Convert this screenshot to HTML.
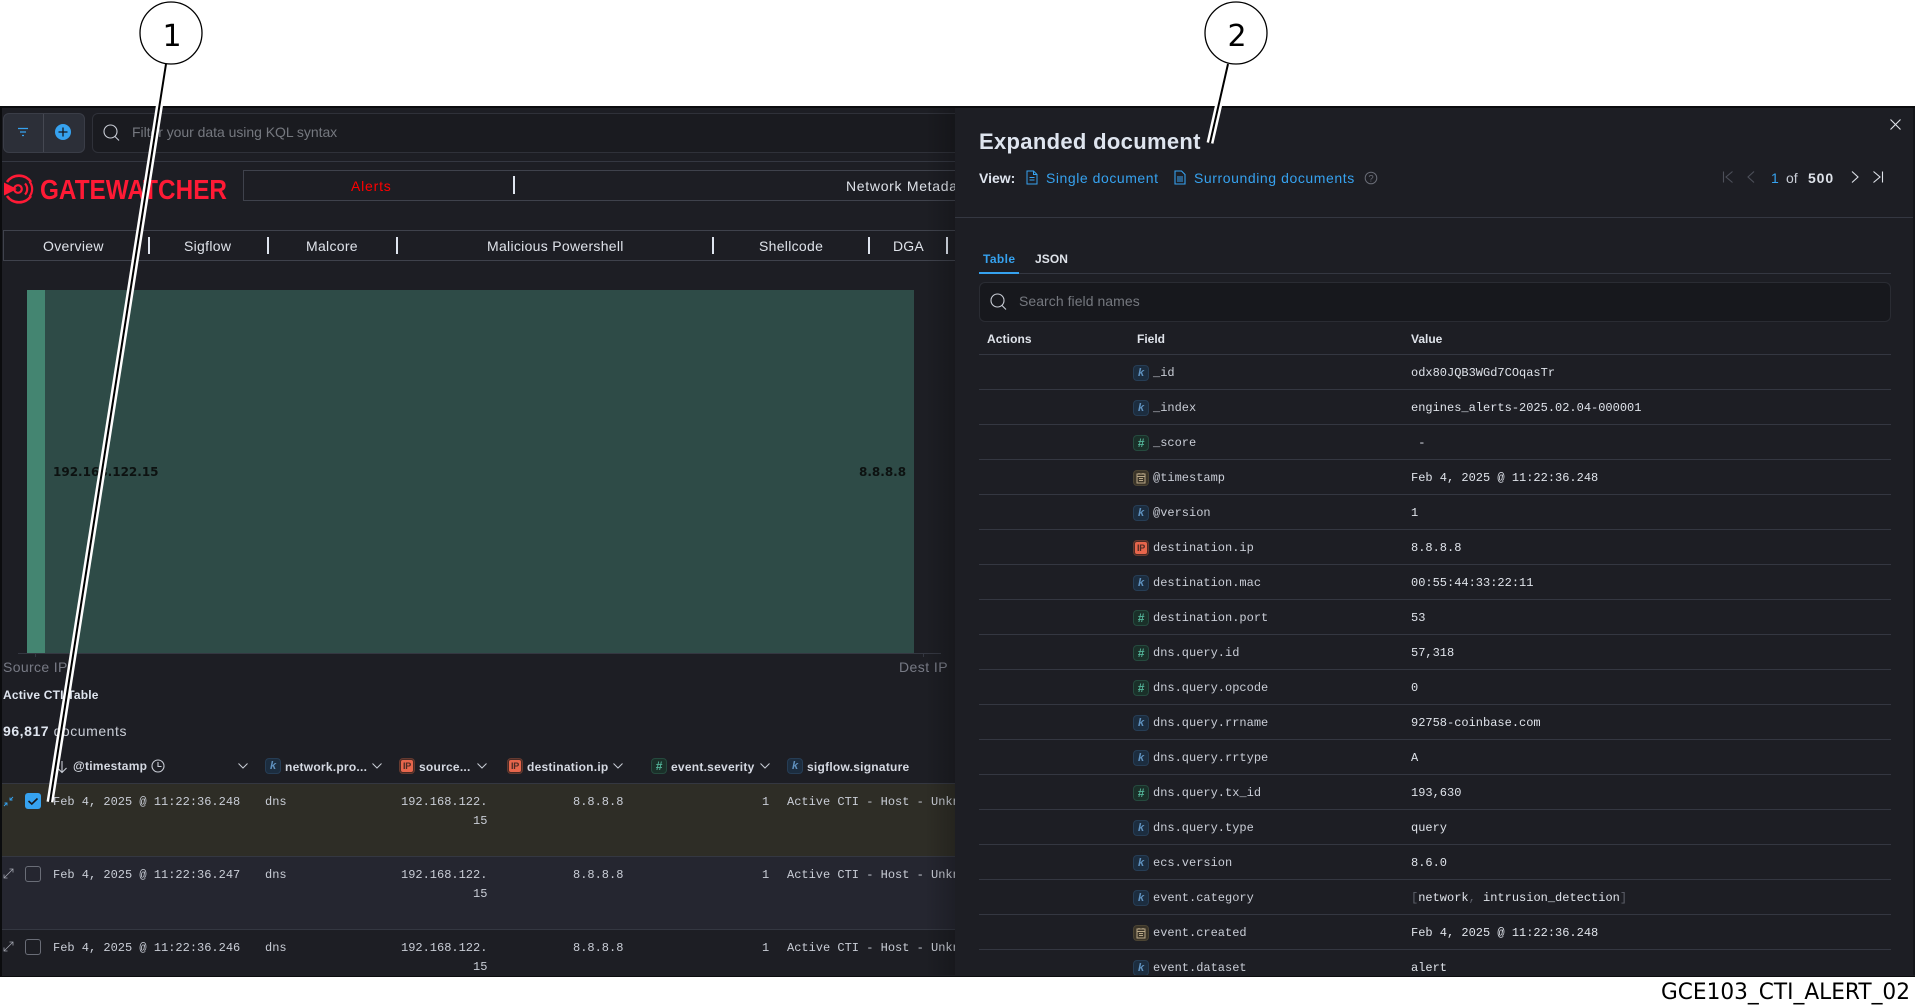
<!DOCTYPE html>
<html><head><meta charset="utf-8"><style>
html,body{margin:0;padding:0;background:#fff;width:1915px;height:1008px;overflow:hidden}
body{position:relative;font-family:"Liberation Sans",sans-serif}
.a{position:absolute;white-space:nowrap}
#app{position:absolute;left:0;top:106px;width:1915px;height:871px;background:#1d1e24;overflow:hidden;border-top:2px solid #0b0c0e;border-bottom:1px solid #0b0c0e;box-sizing:border-box}
#vl{position:absolute;left:0;top:106px;width:2px;height:871px;background:#0b0c0e}
.t{position:absolute;white-space:nowrap;line-height:16px}
.m{font-family:"Liberation Mono",monospace;font-size:12px;color:#c9cdd6;line-height:19px}
.sep{position:absolute;width:2px;height:20px;background:#dfe5ef}
.b{position:absolute;width:16px;height:16px;box-sizing:border-box;border-radius:4px;border:1px solid;text-align:center;font-size:11px;line-height:14px;font-weight:bold;font-style:italic;font-family:"Liberation Sans",sans-serif}
.k{background:#1c2d3f;border-color:#263d55;color:#6092c0}
.h{background:#1a3029;border-color:#254a3e;color:#54b399;font-size:12px}
.i{background:#4b2a24;border-color:#663a30;color:#1d1e24;font-style:normal}
.i:before{content:"IP";position:absolute;left:1px;top:1px;width:12px;height:12px;background:#e7664c;border-radius:2px;font-size:9px;line-height:12px;color:#4b2a24;font-weight:bold;letter-spacing:-.2px}
.d{background:#3a3428;border-color:#4b4433}
.d svg{position:absolute;left:2px;top:1px}
.hd{position:absolute;color:#d5d9e2;font-size:12px;font-weight:bold;line-height:16px;white-space:nowrap;letter-spacing:.25px}
#fly{position:absolute;left:955px;top:108px;width:960px;height:867px;background:#1d1e24;overflow:hidden}
.fr{position:absolute;left:24px;width:912px;height:35px;border-bottom:1px solid #343741;box-sizing:border-box}
.fr .b{left:154px;top:10px}
.fr .n{position:absolute;left:174px;top:10px;font-family:"Liberation Mono",monospace;font-size:12px;line-height:16px;color:#c9cdd6;white-space:nowrap}
.fr .v{position:absolute;left:432px;top:10px;font-family:"Liberation Mono",monospace;font-size:12px;line-height:16px;color:#dfe3ea;white-space:nowrap}
.blue{color:#36a2ef}
</style></head><body>
<div id="app"></div>
<div style="position:absolute;left:0;top:0;width:1915px;height:1008px">
<!-- filter bar -->
<div class="a" style="left:3px;top:113px;width:82px;height:40px;box-sizing:border-box;background:#2c2f38;border:1px solid #3a3d47;border-radius:6px"></div>
<div class="a" style="left:43px;top:114px;width:1px;height:38px;background:#454852"></div>
<svg class="a" style="left:16px;top:126px" width="14" height="12" viewBox="0 0 14 12"><path d="M2 2.500H12M4 6H10M6 9.500H8" stroke="#36a2ef" stroke-width="1.200" fill="none"/></svg>
<svg class="a" style="left:55px;top:124px" width="16" height="16" viewBox="0 0 16 16"><circle cx="8" cy="8" r="8" fill="#36a2ef"/><path d="M8 3.500V12.500M3.500 8H12.500" stroke="#16171c" stroke-width="1.300"/></svg>
<div class="a" style="left:92px;top:113px;width:880px;height:40px;box-sizing:border-box;background:#1a1b20;border:1px solid #2f3139;border-radius:6px"></div>
<svg class="a" style="left:103px;top:124px" width="18" height="18" viewBox="0 0 18 18"><circle cx="7.500" cy="7.500" r="6.500" stroke="#c9cdd6" stroke-width="1.100" fill="none"/><path d="M12 12.500L16 16.500" stroke="#c9cdd6" stroke-width="1.100"/></svg>
<div class="t" style="left:132px;top:124px;font-size:14px;color:#75787f;letter-spacing:-.04px">Filter your data using KQL syntax</div>
<div class="a" style="left:0;top:161px;width:955px;height:1px;background:#343741"></div>
<!-- logo -->
<svg class="a" style="left:2px;top:172px" width="34" height="34" viewBox="0 0 34 34"><path d="M5 10A14.500 14.500 0 0 1 29 10M5 24A14.500 14.500 0 0 0 29 24" stroke="#ff1a35" stroke-width="2.600" fill="none"/><path d="M2 10.500L15 17L2 23.500Z" fill="#ff1a35"/><circle cx="16" cy="17" r="3.800" stroke="#ff1a35" stroke-width="2.200" fill="none"/><path d="M23 11.500A8 8 0 0 1 23 22.500M27.500 9.500A12 12 0 0 1 27.500 24.500" stroke="#ff1a35" stroke-width="2.200" fill="none"/></svg>
<svg class="a" style="left:38px;top:172px" width="195" height="34"><text x="2" y="27" font-family="Liberation Sans" font-weight="bold" font-size="27.500" fill="#ff1a35" textLength="187" lengthAdjust="spacingAndGlyphs">GATEWATCHER</text></svg>
<div class="a" style="left:243px;top:170px;width:730px;height:31px;box-sizing:border-box;border:1px solid #3f424c"></div>
<div class="t" style="left:351px;top:178px;font-size:14px;color:#f00;letter-spacing:.8px">Alerts</div>
<div class="sep" style="left:513px;top:176px;height:18px"></div>
<div class="t" style="left:846px;top:178px;font-size:14px;color:#dfe3ea;letter-spacing:.7px">Network Metadata</div>
<!-- tabs -->
<div class="a" style="left:3px;top:230px;width:970px;height:31px;box-sizing:border-box;border:1px solid #3f424c"></div>
<div class="t" style="left:43px;top:238px;font-size:14px;color:#dfe3ea;letter-spacing:.3px">Overview</div>
<div class="sep" style="left:148px;top:237px;height:17px"></div>
<div class="t" style="left:184px;top:238px;font-size:14px;color:#dfe3ea;letter-spacing:.3px">Sigflow</div>
<div class="sep" style="left:267px;top:237px;height:17px"></div>
<div class="t" style="left:306px;top:238px;font-size:14px;color:#dfe3ea;letter-spacing:.3px">Malcore</div>
<div class="sep" style="left:396px;top:237px;height:17px"></div>
<div class="t" style="left:487px;top:238px;font-size:14px;color:#dfe3ea;letter-spacing:.3px">Malicious Powershell</div>
<div class="sep" style="left:712px;top:237px;height:17px"></div>
<div class="t" style="left:759px;top:238px;font-size:14px;color:#dfe3ea;letter-spacing:.3px">Shellcode</div>
<div class="sep" style="left:868px;top:237px;height:17px"></div>
<div class="t" style="left:893px;top:238px;font-size:14px;color:#dfe3ea;letter-spacing:.2px">DGA</div>
<div class="sep" style="left:946px;top:237px;height:17px"></div>
<!-- chart -->
<div class="a" style="left:27px;top:290px;width:887px;height:363px;background:#2e4b47"></div>
<div class="a" style="left:27px;top:290px;width:18px;height:363px;background:#448571"></div>
<div class="a" style="left:18px;top:653px;width:923px;height:1px;background:#343741"></div>
<div class="a" style="left:35px;top:653px;width:1px;height:4px;background:#343741"></div>
<div class="a" style="left:923px;top:653px;width:1px;height:4px;background:#343741"></div>
<div class="t" style="left:53px;top:464px;font-family:'DejaVu Sans',sans-serif;font-weight:bold;font-size:12px;color:#0d1211">192.168.122.15</div>
<div class="t" style="left:859px;top:464px;font-family:'DejaVu Sans',sans-serif;font-weight:bold;font-size:12px;color:#0d1211">8.8.8.8</div>
<div class="t" style="left:3px;top:659px;font-size:14px;color:#777a85;letter-spacing:.35px">Source IP</div>
<div class="t" style="left:899px;top:659px;font-size:14px;color:#777a85;letter-spacing:.45px">Dest IP</div>
<div class="t" style="left:3px;top:687px;font-size:12px;font-weight:bold;color:#dfe5ef;letter-spacing:.2px">Active CTI Table</div>
<div class="t" style="left:3px;top:723px;font-size:14px;color:#c9cdd6;letter-spacing:.55px"><b style="color:#dfe5ef">96,817</b> documents</div>
<!-- header -->
<svg class="a" style="left:55px;top:760px" width="14" height="14" viewBox="0 0 14 14"><path d="M7 1V12M2.500 8L7 12.500L11.500 8" stroke="#c9cdd6" stroke-width="1.100" fill="none"/></svg>
<div class="hd" style="left:73px;top:758px;font-size:12px">@timestamp</div>
<svg class="a" style="left:151px;top:759px" width="14" height="14" viewBox="0 0 14 14"><circle cx="7" cy="7" r="6" stroke="#c9cdd6" stroke-width="1.100" fill="none"/><path d="M7 3V7.500H10.500" stroke="#c9cdd6" stroke-width="1.100" fill="none"/></svg>
<svg class="a" style="left:237px;top:760px" width="12" height="12" viewBox="0 0 12 12"><path d="M1.500 3.500L6 8L10.500 3.500" stroke="#c9cdd6" stroke-width="1" fill="none"/></svg>
<div class="b k" style="left:265px;top:758px">k</div><div class="hd" style="left:285px;top:759px">network.pro...</div>
<svg class="a" style="left:371px;top:760px" width="12" height="12" viewBox="0 0 12 12"><path d="M1.500 3.500L6 8L10.500 3.500" stroke="#c9cdd6" stroke-width="1" fill="none"/></svg>
<div class="b i" style="left:399px;top:758px"></div><div class="hd" style="left:419px;top:759px">source...</div>
<svg class="a" style="left:476px;top:760px" width="12" height="12" viewBox="0 0 12 12"><path d="M1.500 3.500L6 8L10.500 3.500" stroke="#c9cdd6" stroke-width="1" fill="none"/></svg>
<div class="b i" style="left:507px;top:758px"></div><div class="hd" style="left:527px;top:759px">destination.ip</div>
<svg class="a" style="left:612px;top:760px" width="12" height="12" viewBox="0 0 12 12"><path d="M1.500 3.500L6 8L10.500 3.500" stroke="#c9cdd6" stroke-width="1" fill="none"/></svg>
<div class="b h" style="left:651px;top:758px">#</div><div class="hd" style="left:671px;top:759px">event.severity</div>
<svg class="a" style="left:759px;top:760px" width="12" height="12" viewBox="0 0 12 12"><path d="M1.500 3.500L6 8L10.500 3.500" stroke="#c9cdd6" stroke-width="1" fill="none"/></svg>
<div class="b k" style="left:787px;top:758px">k</div><div class="hd" style="left:807px;top:759px">sigflow.signature</div>
<div class="a" style="left:2px;top:783px;width:953px;height:1px;background:#343741"></div>
<!-- rows -->
<div class="a" style="left:2px;top:784px;width:953px;height:72px;background:#2e2d26"></div>
<div class="a" style="left:2px;top:856px;width:953px;height:1px;background:#343741"></div>
<div class="a" style="left:2px;top:857px;width:953px;height:72px;background:#252630"></div>
<div class="a" style="left:2px;top:929px;width:953px;height:1px;background:#343741"></div>
<svg class="a" style="left:2px;top:795px" width="12" height="12" viewBox="0 0 12 12"><path d="M2 11L5 8M5 10.500V8H2.500M11 2L8 5M8 2.500V5H10.500" stroke="#36a2ef" stroke-width=".9" fill="none"/></svg>
<svg class="a" style="left:2px;top:867px" width="12" height="12" viewBox="0 0 12 12"><path d="M2 11L11 2M7.500 2H11V5.500M2 7.500V11H5.500" stroke="#a0a3ad" stroke-width=".8" fill="none"/></svg>
<svg class="a" style="left:2px;top:940px" width="12" height="12" viewBox="0 0 12 12"><path d="M2 11L11 2M7.500 2H11V5.500M2 7.500V11H5.500" stroke="#a0a3ad" stroke-width=".8" fill="none"/></svg>
<svg class="a" style="left:25px;top:793px" width="16" height="16" viewBox="0 0 16 16"><rect width="16" height="16" rx="3" fill="#36a2ef"/><path d="M3.500 8L6.800 11L12.500 5.500" stroke="#16171c" stroke-width="1.600" fill="none"/></svg>
<div class="a" style="left:25px;top:866px;width:16px;height:16px;box-sizing:border-box;border:1px solid #6a6d77;border-radius:3px"></div>
<div class="a" style="left:25px;top:939px;width:16px;height:16px;box-sizing:border-box;border:1px solid #6a6d77;border-radius:3px"></div>
<div style="position:absolute;left:0;top:0;width:955px;height:976px;overflow:hidden">
<div class="t m" style="left:53px;top:793px">Feb 4, 2025 @ 11:22:36.248</div>
<div class="t m" style="left:265px;top:793px">dns</div>
<div class="t m" style="left:401px;top:793px">192.168.122.</div><div class="t m" style="left:473px;top:812px">15</div>
<div class="t m" style="left:573px;top:793px">8.8.8.8</div>
<div class="t m" style="left:762px;top:793px">1</div>
<div class="t m" style="left:787px;top:793px">Active CTI - Host - Unknown</div>
<div class="t m" style="left:53px;top:866px">Feb 4, 2025 @ 11:22:36.247</div>
<div class="t m" style="left:265px;top:866px">dns</div>
<div class="t m" style="left:401px;top:866px">192.168.122.</div><div class="t m" style="left:473px;top:885px">15</div>
<div class="t m" style="left:573px;top:866px">8.8.8.8</div>
<div class="t m" style="left:762px;top:866px">1</div>
<div class="t m" style="left:787px;top:866px">Active CTI - Host - Unknown</div>
<div class="t m" style="left:53px;top:939px">Feb 4, 2025 @ 11:22:36.246</div>
<div class="t m" style="left:265px;top:939px">dns</div>
<div class="t m" style="left:401px;top:939px">192.168.122.</div><div class="t m" style="left:473px;top:958px">15</div>
<div class="t m" style="left:573px;top:939px">8.8.8.8</div>
<div class="t m" style="left:762px;top:939px">1</div>
<div class="t m" style="left:787px;top:939px">Active CTI - Host - Unknown</div>
</div>
<!-- flyout shadow -->
<div class="a" style="left:925px;top:108px;width:30px;height:867px;background:linear-gradient(to right,rgba(0,0,0,0),rgba(0,0,0,.2))"></div>
<!-- flyout -->
<div id="fly">
<div class="a" style="right:0;top:0;width:2px;height:867px;background:#14151a"></div>
<svg class="a" style="left:934px;top:10px" width="13" height="13" viewBox="0 0 13 13"><path d="M1.500 1.500L11.500 11.500M11.500 1.500L1.500 11.500" stroke="#dfe3ea" stroke-width="1.100"/></svg>
<div class="t" style="left:24px;top:20px;font-size:22px;line-height:28px;font-weight:bold;color:#dfe5ef;letter-spacing:.32px">Expanded document</div>
<div class="t" style="left:24px;top:62px;font-size:14px;font-weight:bold;color:#dfe5ef">View:</div>
<svg class="a" style="left:71px;top:62px" width="12" height="15" viewBox="0 0 12 15"><path d="M1 1H7.500L11 4.500V14H1ZM7.500 1V4.500H11M3.500 7.500H8.500M3.500 10H8.500" stroke="#36a2ef" stroke-width="1" fill="none"/></svg>
<div class="t blue" style="left:91px;top:62px;font-size:14px;letter-spacing:.55px">Single document</div>
<svg class="a" style="left:219px;top:62px" width="12" height="15" viewBox="0 0 12 15"><path d="M1 1H7.500L11 4.500V14H1ZM3 7H9M3 9H9M3 11H9" stroke="#36a2ef" stroke-width="1.100" fill="none"/></svg>
<div class="t blue" style="left:239px;top:62px;font-size:14px;letter-spacing:.58px">Surrounding documents</div>
<svg class="a" style="left:409px;top:63px" width="14" height="14" viewBox="0 0 14 14"><circle cx="7" cy="7" r="5.800" stroke="#6a6d77" stroke-width="1" fill="none"/><text x="7" y="10.500" font-size="9.500" text-anchor="middle" fill="#6a6d77" font-family="Liberation Sans">?</text></svg>
<svg class="a" style="left:766px;top:62px" width="14" height="14" viewBox="0 0 14 14"><path d="M2.500 1.500V12.500M11.500 1.500L5 7L11.500 12.500" stroke="#4d505a" stroke-width="1.100" fill="none"/></svg>
<svg class="a" style="left:789px;top:62px" width="14" height="14" viewBox="0 0 14 14"><path d="M10 1.500L4 7L10 12.500" stroke="#4d505a" stroke-width="1.100" fill="none"/></svg>
<div class="t blue" style="left:816px;top:62px;font-size:14px">1</div>
<div class="t" style="left:831px;top:62px;font-size:14px;color:#c9cdd6">of</div>
<div class="t" style="left:853px;top:62px;font-size:14px;font-weight:bold;color:#dfe3ea;letter-spacing:.9px">500</div>
<svg class="a" style="left:893px;top:62px" width="14" height="14" viewBox="0 0 14 14"><path d="M4 1.500L10 7L4 12.500" stroke="#dfe3ea" stroke-width="1.100" fill="none"/></svg>
<svg class="a" style="left:916px;top:62px" width="14" height="14" viewBox="0 0 14 14"><path d="M2.500 1.500L9 7L2.500 12.500M11.500 1.500V12.500" stroke="#dfe3ea" stroke-width="1.100" fill="none"/></svg>
<div class="a" style="left:0;top:109px;width:958px;height:1px;background:#343741"></div>
<div class="t blue" style="left:28px;top:143px;font-size:12px;font-weight:bold;letter-spacing:.4px">Table</div>
<div class="t" style="left:80px;top:143px;font-size:12px;font-weight:bold;color:#dfe3ea;letter-spacing:.1px">JSON</div>
<div class="a" style="left:24px;top:165px;width:912px;height:1px;background:#343741"></div>
<div class="a" style="left:24px;top:164px;width:40px;height:2px;background:#36a2ef"></div>
<div class="a" style="left:24px;top:174px;width:912px;height:40px;box-sizing:border-box;background:#17181d;border:1px solid #2a2c33;border-radius:6px"></div>
<svg class="a" style="left:35px;top:185px" width="18" height="18" viewBox="0 0 18 18"><circle cx="7.500" cy="7.500" r="6.500" stroke="#c9cdd6" stroke-width="1.100" fill="none"/><path d="M12 12.500L16 16.500" stroke="#c9cdd6" stroke-width="1.100"/></svg>
<div class="t" style="left:64px;top:185px;font-size:14px;color:#75787f;letter-spacing:.05px">Search field names</div>
<div class="t" style="left:32px;top:223px;font-size:12px;font-weight:bold;color:#dfe3ea;letter-spacing:.1px">Actions</div>
<div class="t" style="left:182px;top:223px;font-size:12px;font-weight:bold;color:#dfe3ea">Field</div>
<div class="t" style="left:456px;top:223px;font-size:12px;font-weight:bold;color:#dfe3ea">Value</div>
<div class="a" style="left:24px;top:246px;width:912px;height:1px;background:#343741"></div>
<div class="fr" style="top:247px"><div class="b k">k</div><div class="n">_id</div><div class="v">odx80JQB3WGd7COqasTr</div></div>
<div class="fr" style="top:282px"><div class="b k">k</div><div class="n">_index</div><div class="v">engines_alerts-2025.02.04-000001</div></div>
<div class="fr" style="top:317px"><div class="b h">#</div><div class="n">_score</div><div class="v">&nbsp;-</div></div>
<div class="fr" style="top:352px"><div class="b d"><svg width="10" height="12" viewBox="0 0 10 12"><path d="M1 2H9V11H1ZM1 4.500H9M3 1V2.500M7 1V2.500M3 6.500H7M3 8.500H7" stroke="#b9a888" stroke-width="1" fill="none"/></svg></div><div class="n">@timestamp</div><div class="v">Feb 4, 2025 @ 11:22:36.248</div></div>
<div class="fr" style="top:387px"><div class="b k">k</div><div class="n">@version</div><div class="v">1</div></div>
<div class="fr" style="top:422px"><div class="b i"></div><div class="n">destination.ip</div><div class="v">8.8.8.8</div></div>
<div class="fr" style="top:457px"><div class="b k">k</div><div class="n">destination.mac</div><div class="v">00:55:44:33:22:11</div></div>
<div class="fr" style="top:492px"><div class="b h">#</div><div class="n">destination.port</div><div class="v">53</div></div>
<div class="fr" style="top:527px"><div class="b h">#</div><div class="n">dns.query.id</div><div class="v">57,318</div></div>
<div class="fr" style="top:562px"><div class="b h">#</div><div class="n">dns.query.opcode</div><div class="v">0</div></div>
<div class="fr" style="top:597px"><div class="b k">k</div><div class="n">dns.query.rrname</div><div class="v">92758-coinbase.com</div></div>
<div class="fr" style="top:632px"><div class="b k">k</div><div class="n">dns.query.rrtype</div><div class="v">A</div></div>
<div class="fr" style="top:667px"><div class="b h">#</div><div class="n">dns.query.tx_id</div><div class="v">193,630</div></div>
<div class="fr" style="top:702px"><div class="b k">k</div><div class="n">dns.query.type</div><div class="v">query</div></div>
<div class="fr" style="top:737px"><div class="b k">k</div><div class="n">ecs.version</div><div class="v">8.6.0</div></div>
<div class="fr" style="top:772px"><div class="b k">k</div><div class="n">event.category</div><div class="v"><span style="color:#5d606a">[</span>network<span style="color:#5d606a">,</span> intrusion_detection<span style="color:#5d606a">]</span></div></div>
<div class="fr" style="top:807px"><div class="b d"><svg width="10" height="12" viewBox="0 0 10 12"><path d="M1 2H9V11H1ZM1 4.500H9M3 1V2.500M7 1V2.500M3 6.500H7M3 8.500H7" stroke="#b9a888" stroke-width="1" fill="none"/></svg></div><div class="n">event.created</div><div class="v">Feb 4, 2025 @ 11:22:36.248</div></div>
<div class="fr" style="top:842px"><div class="b k">k</div><div class="n">event.dataset</div><div class="v">alert</div></div>
</div>
<div id="vl"></div>
<!-- annotations -->
<svg class="a" style="left:0;top:0" width="1915" height="1008" viewBox="0 0 1915 1008">
<path d="M166 64L50 802" stroke="#fff" stroke-width="7" fill="none"/>
<path d="M166 64L50 802" stroke="#000" stroke-width="2" fill="none"/>
<path d="M1228 64L1210 143" stroke="#fff" stroke-width="7" fill="none"/>
<path d="M1228 64L1210 143" stroke="#000" stroke-width="2" fill="none"/>
<ellipse cx="171" cy="33" rx="31" ry="31" fill="#fff" stroke="#000" stroke-width="1.300"/>
<ellipse cx="1236" cy="33" rx="31" ry="31" fill="#fff" stroke="#000" stroke-width="1.300"/>
<text x="172" y="46" font-family="DejaVu Sans" font-size="30" text-anchor="middle" fill="#000">1</text>
<text x="1237" y="46" font-family="DejaVu Sans" font-size="30" text-anchor="middle" fill="#000">2</text>
<text x="1910" y="999" font-family="DejaVu Sans" font-size="22" text-anchor="end" fill="#000" textLength="249" lengthAdjust="spacingAndGlyphs">GCE103_CTI_ALERT_02</text>
</svg>
</div>
</body></html>
